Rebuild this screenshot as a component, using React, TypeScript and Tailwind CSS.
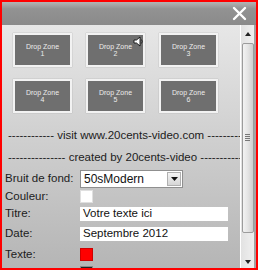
import React from "react";

const zones = ["1", "2", "3", "4", "5", "6"];

function Zone({ n, cursor }: { n: string; cursor?: boolean }) {
  return (
    <div className="relative h-[34px] w-[59px] border-2 border-[#f2f2f2] bg-[#6f6f6f] flex flex-col items-center justify-center text-[7px] leading-[7px] text-[#ececec] shadow-[0_0_1px_#999]">
      <span>Drop Zone</span>
      <span>{n}</span>
      {cursor && (
        <svg className="absolute left-[45px] top-[1px]" width="12" height="11" viewBox="0 0 12 11">
          <path d="M1 4 H3.5 L7 1 V10 L3.5 7 H1 Z" fill="#fff" stroke="#111" strokeWidth="0.9" />
          <path d="M8.5 3.5 Q10 5.5 8.5 7.5" fill="none" stroke="#111" strokeWidth="0.8" />
        </svg>
      )}
    </div>
  );
}

function Row({ label, children, className }: { label: string; children: React.ReactNode; className: string }) {
  return (
    <div className={`flex items-center pl-[3px] ${className}`}>
      <div className="w-[75px] shrink-0 text-[11.5px] text-[#1c1c1c]">{label}</div>
      {children}
    </div>
  );
}

export default function App() {
  return (
    <div
      className="w-[258px] h-[270px] border-2 border-[#ff0000] flex flex-col overflow-hidden"
      style={{ fontFamily: '"Liberation Sans", Arial, sans-serif' }}
    >
      <div className="h-[23px] shrink-0 bg-gradient-to-b from-[#b4b4b4] via-[#929292] via-30% to-[#8a8a8a] flex justify-end items-center pr-[9px]">
        <svg width="15" height="15" viewBox="0 0 15 15">
          <path d="M2 2 L13 13 M13 2 L2 13" stroke="#fff" strokeWidth="2.4" strokeLinecap="round" />
        </svg>
      </div>
      <div className="flex flex-1 min-h-0">
        <div className="flex-1 min-w-0 bg-gradient-to-b from-[#e7e7e7] to-[#b5b5b5] overflow-hidden">
          <div className="grid grid-cols-[59px_59px_59px] gap-x-[14px] gap-y-[12px] pl-[11px] pt-[8px]">
            {zones.map((z) => (
              <Zone key={z} n={z} cursor={z === "2"} />
            ))}
          </div>
          <div className="mt-[11px] pl-[6px] text-[11.5px] text-[#1c1c1c] whitespace-nowrap">
            <div className="h-[22px] leading-[22px]">------------ visit www.20cents-video.com ------------</div>
            <div className="h-[22px] leading-[22px]">--------------- created by 20cents-video ------------</div>
          </div>
          <Row label="Bruit de fond:" className="mt-[2px] h-[18px]">
            <div className="w-[103px] h-[18px] bg-white border border-[#8f8f8f] flex items-center justify-between pl-[3px] pr-[1px]">
              <span className="text-[12px] text-[#111]">50sModern</span>
              <div className="w-[14px] h-[14px] bg-gradient-to-b from-[#f4f4f4] to-[#d6d6d6] border border-[#b0b0b0] flex items-center justify-center">
                <svg width="7" height="4" viewBox="0 0 7 4">
                  <path d="M0 0 H7 L3.5 4 Z" fill="#111" />
                </svg>
              </div>
            </div>
          </Row>
          <Row label="Couleur:" className="mt-[2px] h-[13px]">
            <div className="w-[13px] h-[13px] bg-white border border-[#e0e0e0]" />
          </Row>
          <Row label="Titre:" className="mt-[4px] h-[14px]">
            <div className="w-[148px] h-[14px] bg-white flex items-center pl-[3px] text-[11.5px] text-[#111]">Votre texte ici</div>
          </Row>
          <Row label="Date:" className="mt-[6px] h-[14px]">
            <div className="w-[148px] h-[14px] bg-white flex items-center pl-[3px] text-[11.5px] text-[#111]">Septembre 2012</div>
          </Row>
          <Row label="Texte:" className="mt-[7px] h-[13px]">
            <div className="w-[13px] h-[13px] bg-[#ff0000] border border-[#d00000]" />
          </Row>
          <Row label="" className="mt-[5px] h-[13px]">
            <div className="w-[13px] h-[13px] bg-[#222] border border-[#888]" />
          </Row>
        </div>
        <div className="w-[16px] shrink-0 border-l border-white border-r-2 border-r-[#a4a4a4] bg-gradient-to-r from-[#e2e2e2] to-[#f0f0f0] flex flex-col items-center">
          <div className="h-[18px] flex items-center justify-center">
            <svg width="6" height="4" viewBox="0 0 6 4">
              <path d="M0 4 H6 L3 0 Z" fill="#222" />
            </svg>
          </div>
          <div className="w-[12px] h-[190px] border border-[#9c9c9c] rounded-[2px] bg-gradient-to-r from-[#f3f3f3] via-[#e4e4e4] to-[#cfcfcf] flex flex-col items-center justify-center">
            <div className="flex flex-col gap-[1px] mb-[2px]">
              <div className="w-[5px] h-[1px] bg-[#777]" />
              <div className="w-[5px] h-[1px] bg-[#777]" />
              <div className="w-[5px] h-[1px] bg-[#777]" />
              <div className="w-[5px] h-[1px] bg-[#777]" />
            </div>
          </div>
          <div className="flex-1 flex items-end pb-[4px]">
            <svg width="6" height="4" viewBox="0 0 6 4">
              <path d="M0 0 H6 L3 4 Z" fill="#222" />
            </svg>
          </div>
        </div>
      </div>
    </div>
  );
}
